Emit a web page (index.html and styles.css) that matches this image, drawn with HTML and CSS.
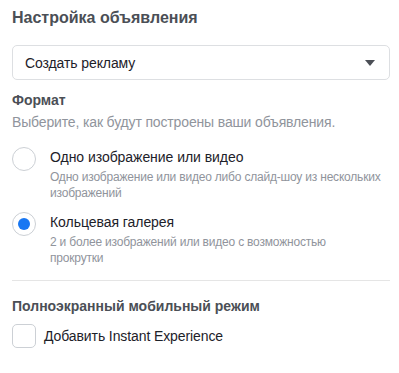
FILE: index.html
```html
<!DOCTYPE html>
<html lang="ru">
<head>
    <meta charset="UTF-8">
    <meta name="viewport" content="width=device-width, initial-scale=1.0">
    <title>Настройка объявления</title>
    <link rel="stylesheet" href="styles.css">
</head>
<body>
    <div class="panel">
        <h1 class="title">Настройка объявления</h1>

        <div class="select">
            <span>Создать рекламу</span>
            <span class="caret"></span>
        </div>

        <h2 class="section-title">Формат</h2>
        <p class="hint">Выберите, как будут построены ваши объявления.</p>

        <div class="options">
            <div class="option">
                <span class="radio"></span>
                <div class="option-text">
                    <div class="option-label">Одно изображение или видео</div>
                    <div class="option-desc">Одно изображение или видео либо слайд-шоу из нескольких изображений</div>
                </div>
            </div>
            <div class="option">
                <span class="radio checked"></span>
                <div class="option-text">
                    <div class="option-label">Кольцевая галерея</div>
                    <div class="option-desc">2 и более изображений или видео с возможностью<br>прокрутки</div>
                </div>
            </div>
        </div>

        <hr class="divider">

        <h2 class="section-title fullscreen">Полноэкранный мобильный режим</h2>
        <div class="check-row">
            <span class="checkbox"></span>
            <span class="check-label">Добавить Instant Experience</span>
        </div>
    </div>
</body>
</html>
```

FILE: styles.css
```css
body {
    margin: 0;
    padding: 0;
    background-color: #fff;
    font-family: "Liberation Sans", Arial, sans-serif;
    color: #1d2129;
}
.panel {
    padding: 8px 9px 0 12px;
}
.title {
    margin: 0;
    font-size: 16px;
    line-height: 20px;
    font-weight: bold;
    color: #4b4f56;
}
.select {
    margin-top: 17px;
    height: 33px;
    border: 1px solid #dddfe2;
    border-radius: 5px;
    display: flex;
    align-items: center;
    justify-content: space-between;
    padding: 0 14px 0 12px;
    font-size: 14px;
    letter-spacing: -0.1px;
    color: #1d2129;
}
.caret {
    width: 0;
    height: 0;
    border-left: 5px solid transparent;
    border-right: 5px solid transparent;
    border-top: 6px solid #4b4f56;
}
.section-title {
    margin: 11px 0 0;
    font-size: 14px;
    line-height: 18px;
    font-weight: bold;
    color: #4b4f56;
}
.hint {
    margin: 4px 0 0;
    font-size: 14px;
    line-height: 18px;
    letter-spacing: -0.15px;
    color: #90949c;
}
.options {
    margin-top: 16px;
    display: flex;
    flex-direction: column;
    gap: 11px;
}
.option {
    display: flex;
    align-items: flex-start;
}
.radio {
    flex: none;
    width: 22px;
    height: 22px;
    border: 1px solid #ccd0d5;
    border-radius: 50%;
    display: flex;
    align-items: center;
    justify-content: center;
    margin-right: 14px;
}
.radio.checked::after {
    content: "";
    width: 12px;
    height: 12px;
    border-radius: 50%;
    background-color: #1877f2;
}
.option-text {
    padding-top: 1px;
}
.option-label {
    font-size: 14px;
    line-height: 18px;
    letter-spacing: -0.05px;
}
.option-desc {
    margin-top: 3px;
    font-size: 12px;
    line-height: 16px;
    letter-spacing: -0.2px;
    color: #90949c;
}
.divider {
    margin: 14px 0 0;
    border: 0;
    border-top: 1px solid #e5e5e5;
}
.section-title.fullscreen {
    margin-top: 16px;
}
.check-row {
    margin-top: 9px;
    display: flex;
    align-items: center;
}
.checkbox {
    flex: none;
    width: 22px;
    height: 22px;
    border: 1px solid #ccd0d5;
    border-radius: 5px;
    margin-right: 8px;
}
.check-label {
    font-size: 14px;
    letter-spacing: -0.1px;
}
```
